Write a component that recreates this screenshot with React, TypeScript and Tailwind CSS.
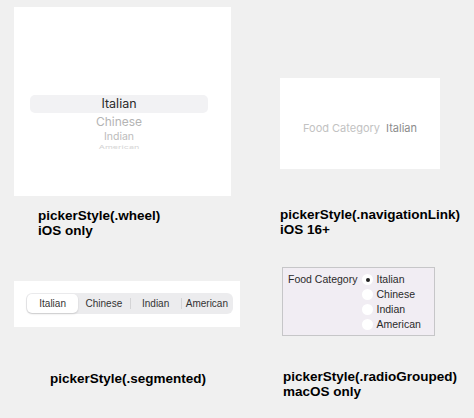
const segments = ['Italian', 'Chinese', 'Indian', 'American'];
const radios = ['Italian', 'Chinese', 'Indian', 'American'];

function Caption({ lines, className = '' }: { lines: string[]; className?: string }) {
	return (
		<div className={`text-[13.5px] font-bold leading-[15px] text-black ${className}`}>
			{lines.map((l) => (
				<div key={l}>{l}</div>
			))}
		</div>
	);
}

export default function App() {
	return (
		<div
			className="w-[474px] h-[418px] bg-[#f0f0f0] flex overflow-hidden"
			style={{ fontFamily: '"Liberation Sans", Arial, sans-serif' }}
		>
			{/* left column */}
			<div className="w-[240px] flex flex-col">
				<div className="ml-[14px] mt-[7px] w-[217px] h-[189px] bg-white flex flex-col items-center pt-[88px]" style={{ fontFamily: 'Inter, sans-serif' }}>
					<div className="w-[178px] h-[18px] mr-[7px] rounded-[5px] bg-[#f2f2f4] flex items-center justify-center text-[12.5px] text-[#2a2a2a]">
						Italian
					</div>
					<div className="mr-[7px] mt-[1px] h-[16px] leading-[16px] text-[12px] text-[#b4b4b4]">Chinese</div>
					<div className="mr-[7px] h-[14px] leading-[14px] text-[10.5px] text-[#bcbcbc]">Indian</div>
					{/* last row squashed like the wheel's far edge */}
					<div className="mr-[7px] h-[8px] leading-[9px] text-[9px] text-[#d6d6d6] scale-y-[0.6] origin-top">American</div>
				</div>
				<Caption lines={['pickerStyle(.wheel)', 'iOS only']} className="ml-[38px] mt-[12px]" />
				<div className="ml-[14px] mt-[43px] w-[226px] h-[46px] bg-white pl-[12px] pt-[12px]">
					<div className="w-[207px] h-[21px] rounded-[6px] bg-[#ececee] flex items-center p-[1px]">
						{segments.map((s, i) => (
							<div key={s} className="flex-1 h-full flex items-center">
								{i > 1 && <div className="w-px h-[11px] bg-[#d4d4d6]" />}
								<div
									className={`flex-1 h-full flex items-center justify-center text-[10px] text-[#333] ${
										i === 0 ? 'bg-white rounded-[5px] shadow-[0_1px_2px_rgba(0,0,0,0.15)]' : ''
									}`}
								>
									{s}
								</div>
							</div>
						))}
					</div>
				</div>
				<Caption lines={['pickerStyle(.segmented)']} className="ml-[50px] mt-[44px]" />
			</div>

			{/* right column */}
			<div className="flex-1 flex flex-col">
				<div className="ml-[40px] mt-[78px] w-[160px] h-[91px] bg-white flex items-center justify-center pt-[9px] gap-[6px] text-[11px]" style={{ fontFamily: 'Inter, sans-serif' }}>
					<span className="text-[#c2c2c2]">Food Category</span>
					<span className="text-[#8c8c8c]">Italian</span>
				</div>
				<Caption lines={['pickerStyle(.navigationLink)', 'iOS 16+']} className="ml-[40px] mt-[38px]" />
				<div className="ml-[42px] mt-[30px] w-[153px] h-[69px] bg-[#f1edf3] border-[1.5px] border-[#c6c6c8] flex pl-[5px] pt-[4px] text-[10.5px] text-[#2a2a2a]">
					<div className="leading-[15px] whitespace-nowrap">Food Category</div>
					<div className="ml-[5px] flex flex-col">
						{radios.map((r, i) => (
							<div key={r} className="flex items-center h-[15px] gap-[3px] whitespace-nowrap">
								<div className="w-[11px] h-[11px] rounded-full bg-white flex items-center justify-center">
									{i === 0 && <div className="w-[4px] h-[4px] rounded-full bg-[#222]" />}
								</div>
								<span>{r}</span>
							</div>
						))}
					</div>
				</div>
				<Caption lines={['pickerStyle(.radioGrouped)', 'macOS only']} className="ml-[43px] mt-[33px]" />
			</div>
		</div>
	);
}
